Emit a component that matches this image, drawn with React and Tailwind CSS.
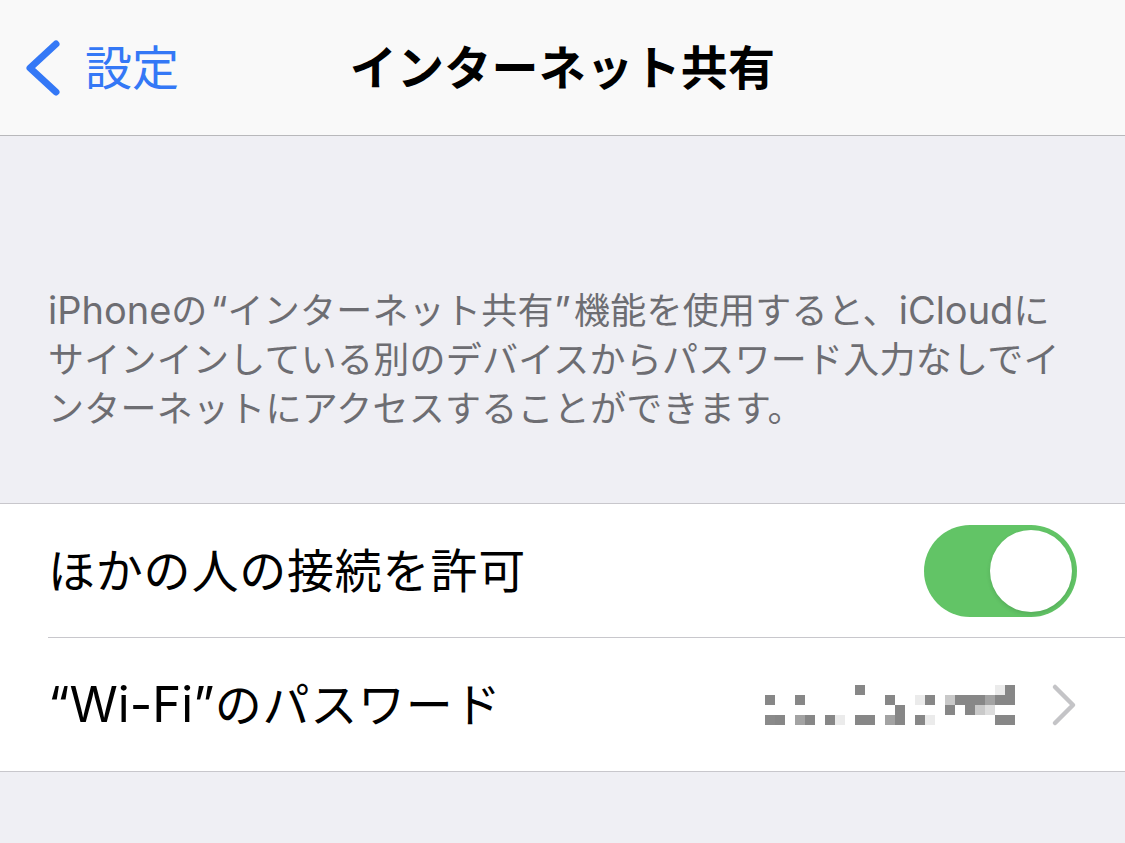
import React from "react";

const D = "#878787";
const M = "#a3a3a3";
const L = "#c9c9c9";
const V = "#ebebeb";

const cells = [
  [9, 0, D], [23, 0, V], [24, 0, D],
  [0, 1, D], [3, 1, D], [12, 1, D], [15, 1, V], [16, 1, D], [18, 1, L], [19, 1, D], [20, 1, D], [21, 1, D], [22, 1, M], [23, 1, D], [24, 1, D],
  [13, 2, D], [18, 2, D], [20, 2, D], [21, 2, L], [22, 2, "#dddddd"],
  [0, 3, "#8a8a8a"], [1, 3, D], [3, 3, M], [4, 3, D], [6, 3, D], [7, 3, V], [9, 3, D], [10, 3, D], [12, 3, M], [13, 3, D], [15, 3, D], [16, 3, V], [23, 3, D], [24, 3, D],
];

function Pixelated() {
  return (
    <svg width="250" height="40" viewBox="0 0 250 40" className="block shrink-0">
      {cells.map(([c, r, fill], i) => (
        <rect key={i} x={c * 10} y={r * 10} width="10" height="10" fill={fill} />
      ))}
    </svg>
  );
}

const font = { fontFamily: 'Inter, "Noto Sans CJK JP", sans-serif' };

export default function App() {
  return (
    <div className="w-[1125px] h-[843px] bg-[#efeff4] overflow-hidden" style={font}>
      {/* Nav bar */}
      <div className="h-[136px] bg-[#f9f9f9] border-b border-[#b8b8bb] grid grid-cols-[1fr_auto_1fr] items-center">
        <div className="flex items-center pl-[24px]">
          <svg width="38" height="60" viewBox="0 0 38 60" className="block">
            <path d="M32 6 L6 30 L32 54" fill="none" stroke="#3478f6" strokeWidth="7" strokeLinecap="round" strokeLinejoin="round" />
          </svg>
          <span className="ml-[23px] text-[47px] leading-none text-[#3478f6]">設定</span>
        </div>
        <div className="text-[47px] leading-none font-bold tracking-[0.3px] text-black">インターネット共有</div>
        <div />
      </div>

      {/* Description */}
      <div className="pt-[150px] pb-[69px] pl-[48px] text-[36px] leading-[49px] tracking-[0.25px] text-[#6d6d72] whitespace-nowrap">
        <span className="text-[38px] tracking-normal">iPhone</span>の<span className="inline-block w-[20px] text-right text-[38px] tracking-normal">“</span>インターネット共有<span className="inline-block w-[20px] text-left text-[38px] tracking-normal">”</span>機能を使用すると、<span className="text-[38px] tracking-normal">iCloud</span>に
        <br />
        サインインしている別のデバイスからパスワード入力なしでイ
        <br />
        ンターネットにアクセスすることができます。
      </div>

      {/* Group */}
      <div className="bg-white border-t border-b border-[#c8c7cc]">
        <div className="h-[133px] flex items-center pl-[48px] pr-[48px]">
          <span className="flex-1 text-[47px] leading-none tracking-[0.8px] text-black">ほかの人の接続を許可</span>
          <div className="w-[153px] h-[92px] rounded-full bg-[#62c466] p-[5px] flex justify-end">
            <div className="w-[82px] h-[82px] rounded-full bg-white shadow-[0_2px_4px_rgba(0,0,0,0.12)]" />
          </div>
        </div>
        <div className="ml-[48px] h-px bg-[#c8c7cc]" />
        <div className="h-[133px] flex items-center pl-[48px] pr-[48px]">
          <span className="flex-1 text-[47px] leading-none tracking-[0.8px] text-black">
            <span className="text-[49px] tracking-normal">“Wi-Fi”</span>のパスワード
          </span>
          <Pixelated />
          <svg width="26" height="44" viewBox="0 0 26 44" className="block ml-[36px]">
            <path d="M4 4 L22 22 L4 40" fill="none" stroke="#c4c4c7" strokeWidth="4.5" strokeLinecap="round" strokeLinejoin="round" />
          </svg>
        </div>
      </div>
    </div>
  );
}
